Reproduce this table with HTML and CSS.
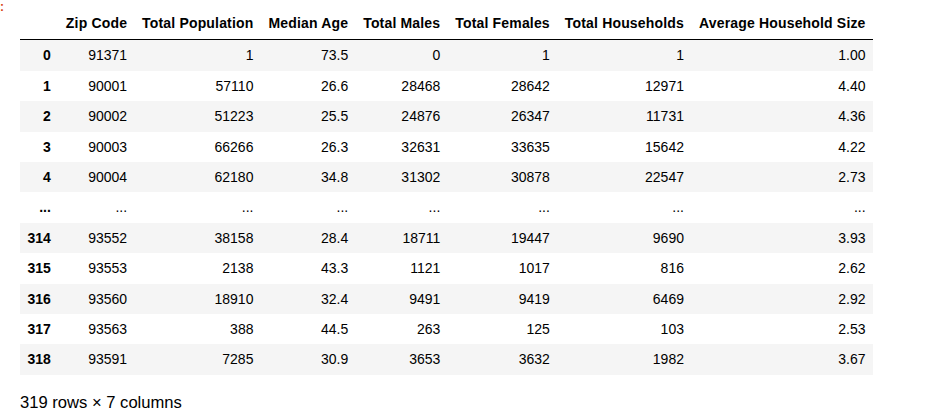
FILE: index.html
```html
<!DOCTYPE html>
<html>
<head>
<meta charset="utf-8">
<link rel="stylesheet" href="styles.css">
</head>
<body>
<div class="output">
  <div class="prompt">:</div>
  <div class="result">
    <table class="dataframe">
      <thead>
        <tr><th></th><th>Zip Code</th><th>Total Population</th><th>Median Age</th><th>Total Males</th><th>Total Females</th><th>Total Households</th><th>Average Household Size</th></tr>
      </thead>
      <tbody>
        <tr><th>0</th><td>91371</td><td>1</td><td>73.5</td><td>0</td><td>1</td><td>1</td><td>1.00</td></tr>
        <tr><th>1</th><td>90001</td><td>57110</td><td>26.6</td><td>28468</td><td>28642</td><td>12971</td><td>4.40</td></tr>
        <tr><th>2</th><td>90002</td><td>51223</td><td>25.5</td><td>24876</td><td>26347</td><td>11731</td><td>4.36</td></tr>
        <tr><th>3</th><td>90003</td><td>66266</td><td>26.3</td><td>32631</td><td>33635</td><td>15642</td><td>4.22</td></tr>
        <tr><th>4</th><td>90004</td><td>62180</td><td>34.8</td><td>31302</td><td>30878</td><td>22547</td><td>2.73</td></tr>
        <tr><th>...</th><td>...</td><td>...</td><td>...</td><td>...</td><td>...</td><td>...</td><td>...</td></tr>
        <tr><th>314</th><td>93552</td><td>38158</td><td>28.4</td><td>18711</td><td>19447</td><td>9690</td><td>3.93</td></tr>
        <tr><th>315</th><td>93553</td><td>2138</td><td>43.3</td><td>1121</td><td>1017</td><td>816</td><td>2.62</td></tr>
        <tr><th>316</th><td>93560</td><td>18910</td><td>32.4</td><td>9491</td><td>9419</td><td>6469</td><td>2.92</td></tr>
        <tr><th>317</th><td>93563</td><td>388</td><td>44.5</td><td>263</td><td>125</td><td>103</td><td>2.53</td></tr>
        <tr><th>318</th><td>93591</td><td>7285</td><td>30.9</td><td>3653</td><td>3632</td><td>1982</td><td>3.67</td></tr>
      </tbody>
    </table>
    <p class="shape">319 rows × 7 columns</p>
  </div>
</div>
</body>
</html>
```
FILE: styles.css
```css
html, body {
  margin: 0;
  padding: 0;
  background: #ffffff;
}
body {
  font-family: "Liberation Sans", Arial, sans-serif;
  color: #000000;
}
.output {
  position: relative;
  width: 949px;
  height: 416px;
  overflow: hidden;
}
.prompt {
  position: absolute;
  left: 0;
  top: 0;
  font-family: "Liberation Sans", Arial, sans-serif;
  font-size: 12px;
  line-height: 14px;
  font-weight: bold;
  color: #d84315;
}
.result {
  padding: 9px 0 0 20px;
}
.dataframe {
  border-collapse: collapse;
  border-spacing: 0;
  font-size: 14px;
}
.dataframe th,
.dataframe td {
  text-align: right;
  vertical-align: middle;
  padding: 7px 7.5px;
  line-height: 16.4px;
  white-space: nowrap;
}
.dataframe th {
  font-weight: bold;
}
.dataframe thead th {
  border-bottom: 1px solid #000000;
  padding-top: 6px;
  padding-bottom: 8px;
  letter-spacing: 0.17px;
}
.dataframe tbody tr:nth-child(odd) {
  background: #f5f5f5;
}
.shape {
  margin: 18px 0 0 0;
  font-size: 16.6px;
  line-height: 19px;
}
```
